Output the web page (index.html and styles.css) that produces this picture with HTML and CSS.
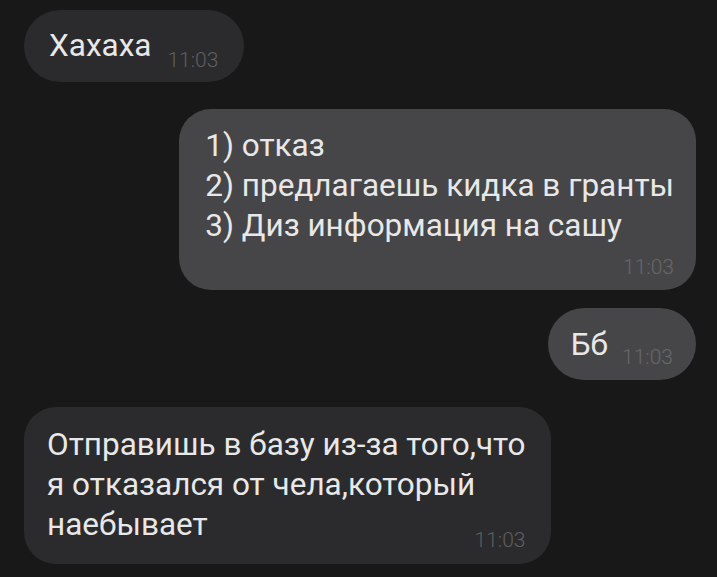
FILE: index.html
```html
<!DOCTYPE html>
<html lang="ru">
<head>
<meta charset="utf-8">
<link rel="stylesheet" href="styles.css">
</head>
<body>
<div class="chat">
  <div class="bubble in row b1">
    <div class="text">Хахаха</div>
    <div class="time">11:03</div>
  </div>
  <div class="bubble out col b2">
    <div class="text">1) отказ<br>2) предлагаешь кидка в гранты<br>3) Диз информация на сашу</div>
    <div class="time">11:03</div>
  </div>
  <div class="bubble out row b3">
    <div class="text">Бб</div>
    <div class="time">11:03</div>
  </div>
  <div class="bubble in col b4">
    <div class="text">Отправишь в базу из-за того,что<br>я отказался от чела,который<br>наебывает</div>
    <div class="time">11:03</div>
  </div>
</div>
</body>
</html>
```
FILE: styles.css
```css
html, body {
  margin: 0;
  padding: 0;
  background: #181818;
  height: 100%;
}
body {
  font-family: Roboto, "Noto Sans", sans-serif;
  color: #e8e8e8;
  overflow: hidden;
}
.chat {
  display: flex;
  flex-direction: column;
  padding: 10px 21px 0 24px;
}
.bubble {
  display: flex;
  font-size: 31.5px;
  line-height: 40px;
}
.bubble.in { align-self: flex-start; background: #2b2b2d; }
.bubble.out { align-self: flex-end; background: #464649; }
.row { flex-direction: row; align-items: flex-end; }
.col { flex-direction: column; }
.time {
  font-size: 21px;
  line-height: 21px;
  font-weight: 300;
  color: #5e5e60;
}
.out .time { color: #666669; }
.b1 {
  border-radius: 36px;
  padding: 16px 26px 11px 25px;
}
.b1 .text { margin-bottom: 5px; }
.b1 .time { margin-left: 16px; }
.b2 {
  margin-top: 27px;
  border-radius: 32px;
  padding: 17px 22px 12px 26px;
}
.b2 .time { align-self: flex-end; margin-top: 11px; }
.b3 {
  margin-top: 18px;
  border-radius: 36px;
  padding: 17px 23px 12px 23px;
}
.b3 .text { margin-bottom: 3px; }
.b3 .time { margin-left: 14px; }
.b4 {
  margin-top: 27px;
  border-radius: 32px;
  padding: 18px 25px 13px 23px;
}
.b4 .time { align-self: flex-end; margin-top: -15px; }
```
